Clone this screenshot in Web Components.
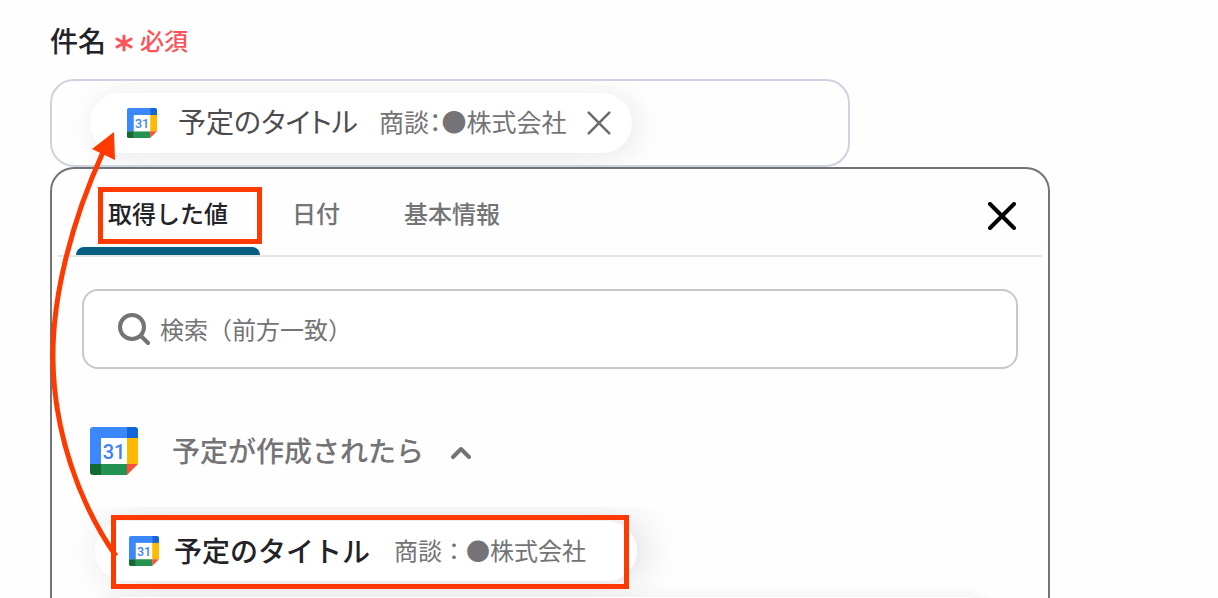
<!DOCTYPE html>
<html lang="ja">
<head>
<meta charset="utf-8">
<meta name="viewport" content="width=device-width, initial-scale=1">
<title>件名</title>
<style>
  body { margin: 0; background: #fefefe; color: #232226; font-family: "Noto Sans CJK JP", "Noto Sans", sans-serif; overflow: hidden; }
</style>
</head>
<body>
<subject-form></subject-form>

<script>
const define = (name, html, setup) => {
  const template = document.createElement('template');
  template.innerHTML = html;
  customElements.define(name, class extends HTMLElement {
    constructor() {
      super();
      this.attachShadow({ mode: 'open' }).append(template.content.cloneNode(true));
    }
    connectedCallback() { if (setup) setup(this, this.shadowRoot); }
  });
};

/* Calendar logo; its size comes from --size */
define('calendar-icon', `
  <style>
    :host { display: block; flex: none; width: var(--size, 30px); height: var(--size, 30px); }
    svg { display: block; width: 100%; height: 100%; }
    text { font: 500 20px Roboto, sans-serif; fill: #3f82f5; }
  </style>
  <svg viewBox="0 0 48 48" role="img" aria-label="Calendar">
    <path fill="#3b87fc" d="M3 0H37V11H11V37H0V3Q0 0 3 0Z"/>
    <path fill="#1366da" d="M37 0H45Q48 0 48 3V11H37Z"/>
    <path fill="#ffb901" d="M37 11H48V37H37Z"/>
    <path fill="#249250" d="M11 37H37V48H11Z"/>
    <path fill="#116b33" d="M0 37H11V48H3Q0 48 0 45Z"/>
    <path fill="#fd4f37" d="M37 37H48L37 48Z"/>
    <path fill="#fff" d="M11 11H37V37H11Z"/>
    <text x="24" y="32" text-anchor="middle">31</text>
  </svg>`);

define('cross-icon', `
  <style>
    :host { display: block; width: 28px; height: 28px; }
    svg { display: block; width: 100%; height: 100%; fill: none; stroke: currentColor; stroke-width: var(--stroke, 4); stroke-linecap: round; }
  </style>
  <svg viewBox="0 0 28 28" aria-hidden="true"><path d="M2 2L26 26M26 2L2 26"/></svg>`);

define('field-label', `
  <style>
    :host { display: flex; align-items: center; gap: 9px; }
    label { font-size: 28px; line-height: 40px; font-weight: 500; }
    .required { display: flex; align-items: center; gap: 7px; color: #fd5358; font-size: 24px; line-height: 40px; font-weight: 500; }
    svg { width: 18px; height: 18px; padding-top: 6px; fill: none; stroke: currentColor; stroke-width: 3; stroke-linecap: round; }
  </style>
  <label><slot></slot></label>
  <span class="required"><svg viewBox="0 0 18 18" aria-hidden="true"><path d="M9 2V16M2 5L16 13M16 5L2 13"/></svg><span>必須</span></span>`);

define('value-chip', `
  <style>
    :host { display: flex; align-items: center; box-sizing: border-box; width: fit-content; height: 60px; border-radius: 30px; padding: 0 18px 0 37px; background: #fff; box-shadow: 4px 4px 28px rgba(60,40,70,.11); font-feature-settings: "palt"; white-space: nowrap; }
    .name, .value { line-height: 40px; padding-bottom: 4px; }
    .name { margin-left: 21px; font-size: 28px; color: #4c4b4f; }
    .value { margin-left: 21px; font-size: 25px; color: #747376; }
    button { margin-left: 18px; padding: 3px; border: 0; background: none; color: #6c6b6f; --stroke: 3; }
    cross-icon { width: 24px; height: 24px; }
  </style>
  <calendar-icon></calendar-icon>
  <span class="name"><slot name="name"></slot></span>
  <span class="value"><slot></slot></span>
  <button type="button" aria-label="削除"><cross-icon></cross-icon></button>`);

define('token-field', `
  <style>
    :host { display: flex; align-items: center; box-sizing: border-box; max-width: 800px; height: 88px; padding: 0 38px; border: 2px solid #cdd3df; border-radius: 24px; overflow: hidden; }
  </style>
  <slot></slot>`);

define('tab-item', `
  <style>
    :host { display: block; position: relative; }
    button { display: block; border: 0; background: none; margin: 0; padding: 28px 32px 26px; font: 500 24px/32px "Noto Sans CJK JP", sans-serif; color: #747376; white-space: nowrap; }
    :host([selected]) button { color: #232226; }
    :host([selected])::after { content: ""; position: absolute; inset: auto 0 0 0; height: 8px; border-radius: 8px 8px 0 0; background: #045f82; }
    :host([marked])::before { content: ""; position: absolute; z-index: 1; inset: 18px -2px 11px 22px; border: 5px solid #ff3a00; pointer-events: none; }
  </style>
  <button type="button" role="tab"><slot></slot></button>`, (host, root) => {
    root.querySelector('button').setAttribute('aria-selected', host.hasAttribute('selected'));
  });

define('tab-bar', `
  <style>
    :host { display: flex; justify-content: space-between; align-items: center; margin: 0 6px; padding: 0 20px 0 18px; border-bottom: 2px solid #e6e6e7; }
    .tabs { display: flex; }
    .close { padding: 6px; border: 0; background: none; color: #000; margin-top: 8px; }
  </style>
  <div class="tabs" role="tablist"><slot></slot></div>
  <button class="close" type="button" aria-label="閉じる"><cross-icon></cross-icon></button>`);

define('search-box', `
  <style>
    :host { display: block; margin: 32px 30px 0; }
    label { display: flex; align-items: center; gap: 10px; box-sizing: border-box; height: 80px; padding: 0 34px; border: 2px solid #c8c8c9; border-radius: 16px; background: #fff; color: #747376; }
    svg { flex: none; width: 32px; height: 32px; fill: none; stroke: currentColor; stroke-width: 4; stroke-linecap: round; }
    input { flex: 1; min-width: 0; border: 0; outline: 0; padding: 0; background: none; font: 400 24px/36px "Noto Sans CJK JP", sans-serif; color: inherit; }
    input::placeholder { color: #747376; opacity: 1; }
  </style>
  <label>
    <svg viewBox="0 0 32 32" aria-hidden="true"><circle cx="14" cy="14" r="12"/><path d="M23 23L30 30"/></svg>
    <input type="text" placeholder="検索（前方一致）" aria-label="検索（前方一致）">
  </label>`);

define('value-group', `
  <style>
    :host { display: block; padding-top: 58px; }
    .head { display: flex; align-items: center; height: 48px; margin: 0 38px; padding: 0; border: 0; background: none; font: 500 28px/40px "Noto Sans CJK JP", sans-serif; color: #747376; --size: 48px; }
    .title { margin-left: 34px; padding-bottom: 2px; white-space: nowrap; }
    .head svg { width: 24px; height: 24px; margin-left: 25px; padding-top: 4px; fill: none; stroke: currentColor; stroke-width: 4; stroke-linecap: round; stroke-linejoin: round; }
    .list { display: flex; flex-direction: column; gap: 16px; margin-top: 32px; padding: 14px 43px 0; overflow: hidden; }
  </style>
  <button class="head" type="button" aria-expanded="true">
    <calendar-icon></calendar-icon>
    <span class="title"><slot name="title"></slot></span>
    <svg viewBox="0 0 24 24" aria-hidden="true"><path d="M4 16L12 8L20 16"/></svg>
  </button>
  <div class="list"><slot></slot></div>`);

define('value-option', `
  <style>
    :host { display: block; position: relative; width: fit-content; }
    button { display: flex; align-items: center; box-sizing: border-box; height: 60px; min-width: 542px; border: 0; border-radius: 30px; padding: 0 34px; background: #fff; box-shadow: 8px 0 36px rgba(60,40,70,.16); font-family: inherit; white-space: nowrap; }
    .name, .value { line-height: 40px; padding-bottom: 2px; }
    .name { margin-left: 15px; font-size: 28px; font-weight: 500; color: #232226; }
    .value { margin-left: 24px; font-size: 24px; color: #747376; }
    :host([marked])::after { content: ""; position: absolute; inset: -6px 8px -8px 16px; border: 5px solid #ff3a00; pointer-events: none; }
    :host([blank]) { width: auto; max-width: 900px; }
    :host([blank]) button { width: 100%; box-shadow: 0 0 16px rgba(60,40,70,.08); }
    :host([blank]) button > * { display: none; }
  </style>
  <button type="button">
    <calendar-icon></calendar-icon>
    <span class="name"><slot name="name"></slot></span>
    <span class="value"><slot></slot></span>
  </button>`);

define('value-panel', `
  <style>
    :host { display: block; box-sizing: border-box; max-width: 1000px; border: 2px solid #747376; border-bottom: 0; border-radius: 24px 24px 0 0; background: #fefefe; overflow: hidden; }
  </style>
  <slot></slot>`);

/* Hand-drawn pointer from the chosen option up to the field */
define('guide-arrow', `
  <style>
    :host { position: absolute; top: 0; left: 0; pointer-events: none; }
    svg { display: block; }
  </style>
  <svg width="130" height="598" viewBox="0 0 130 598" aria-hidden="true">
    <path fill="none" stroke="#ff3a00" stroke-width="5" d="M116 556C78 502 54 430 53 360C52 300 70 225 103 152"/>
    <path fill="#ff3a00" d="M114 132L92 149L115 160Z"/>
  </svg>`);

define('subject-form', `
  <style>
    :host { display: flex; flex-direction: column; box-sizing: border-box; position: relative; height: 100vh; padding: 20px 50px 0; }
    field-label { margin-bottom: 19px; }
    value-panel { flex: 1; min-height: 0; }
  </style>
  <field-label>件名</field-label>
  <token-field><value-chip><span slot="name">予定のタイトル</span>商談：●株式会社</value-chip></token-field>
  <value-panel>
    <tab-bar>
      <tab-item selected marked>取得した値</tab-item>
      <tab-item>日付</tab-item>
      <tab-item>基本情報</tab-item>
    </tab-bar>
    <search-box></search-box>
    <value-group>
      <span slot="title">予定が作成されたら</span>
      <value-option marked><span slot="name">予定のタイトル</span>商談：●株式会社</value-option>
      <value-option blank></value-option>
    </value-group>
  </value-panel>
  <guide-arrow></guide-arrow>`);
</script>
</body>
</html>
